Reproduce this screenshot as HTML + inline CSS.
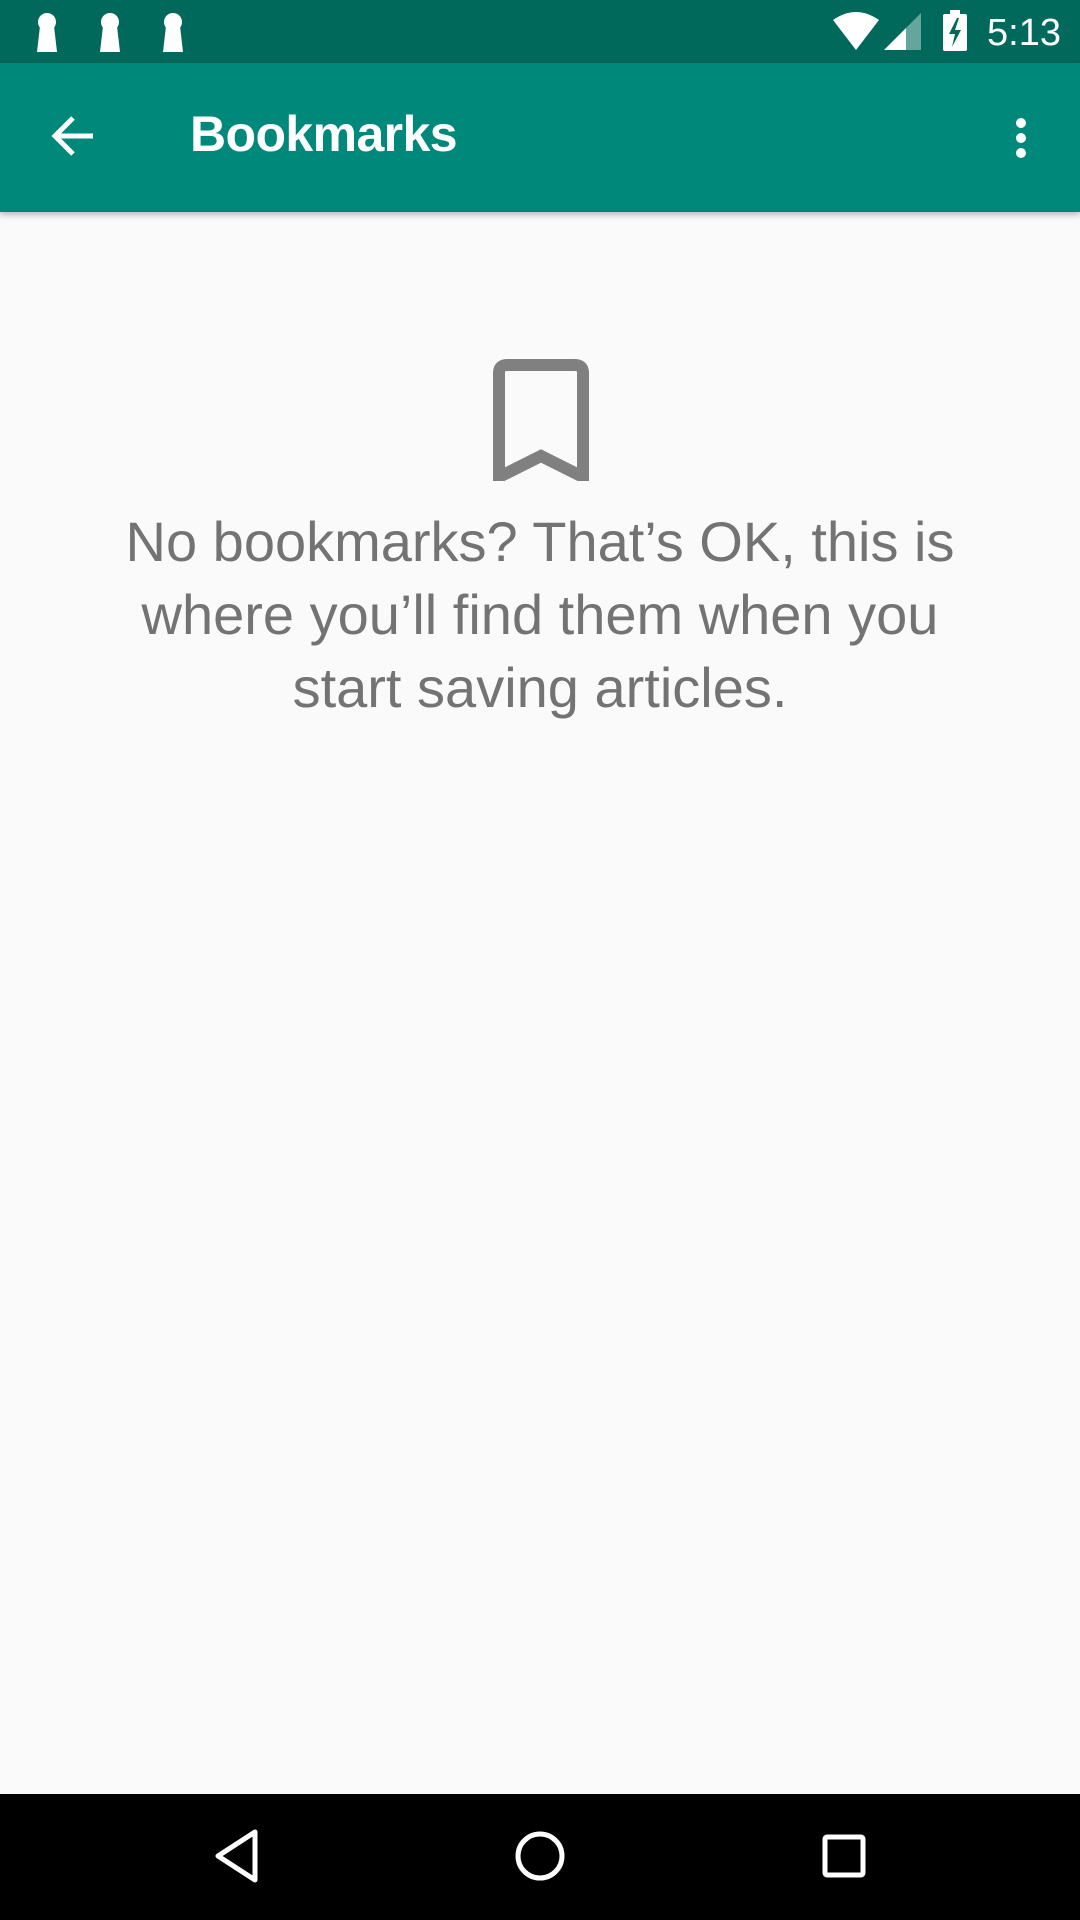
<!DOCTYPE html>
<html><head><meta charset="utf-8"><style>
html,body{margin:0;padding:0;}
body{width:1080px;height:1920px;background:#fafafa;position:relative;overflow:hidden;font-family:"Liberation Sans",sans-serif;}
.status{position:absolute;left:0;top:0;width:1080px;height:63px;background:#00695c;}
.bar{position:absolute;left:0;top:63px;width:1080px;height:149px;background:#00897b;box-shadow:0 3px 6px rgba(0,0,0,0.25);}
.title{position:absolute;left:190px;top:104px;font-size:50px;font-weight:bold;color:#fff;letter-spacing:-0.6px;}
.msg{position:absolute;left:0;width:1080px;text-align:center;font-size:56px;color:#737373;letter-spacing:0;font-weight:300;}
.nav{position:absolute;left:0;top:1794px;width:1080px;height:126px;background:#000;}
</style></head><body>
<div class="status">
<svg width="1080" height="63" style="position:absolute;left:0;top:0">
 <g fill="#fff">
  <g transform="translate(47,0)"><circle cx="0" cy="22" r="9"/><path d="M-7 26 L7 26 L10 52 L-10 52 Z"/></g>
  <g transform="translate(110,0)"><circle cx="0" cy="22" r="9"/><path d="M-7 26 L7 26 L10 52 L-10 52 Z"/></g>
  <g transform="translate(173,0)"><circle cx="0" cy="22" r="9"/><path d="M-7 26 L7 26 L10 52 L-10 52 Z"/></g>
  <path d="M833 20 Q856 4 879 20 L856 50 Z"/>
  <path d="M884 50 L906 28 L906 50 Z"/>
  <path d="M906 28 L921 13 L921 50 L906 50 Z" fill="#fff" fill-opacity="0.4"/>
  <rect x="943" y="14" width="24" height="37" rx="2"/>
  <rect x="950" y="10" width="10" height="5"/>
  <path d="M957 18 L949 34 L955 34 L952 47 L961 30 L955 30 L959 18 Z" fill="#00695c"/>
 </g>
 <text x="987" y="45" fill="#fff" font-size="38" font-family="Liberation Sans">5:13</text>
</svg>
</div>
<div class="bar">
<svg width="1080" height="149" style="position:absolute;left:0;top:0">
 <path d="M93 73 L56 73 M73 55 L55 73 L73 91" stroke="#fff" stroke-width="5" fill="none"/>
 <g fill="#fff"><circle cx="1021" cy="60" r="5"/><circle cx="1021" cy="75" r="5"/><circle cx="1021" cy="90" r="5"/></g>
</svg>
<div class="title" style="top:42px">Bookmarks</div>
</div>
<svg width="96" height="122" style="position:absolute;left:493px;top:359px">
 <path d="M6 118 L6 14 Q6 6 14 6 L82 6 Q90 6 90 14 L90 118 L48 97 Z" fill="none" stroke="#808080" stroke-width="12" stroke-linejoin="miter"/>
</svg>
<div class="msg" style="top:509px">No bookmarks? That’s OK, this is</div>
<div class="msg" style="top:582px">where you’ll find them when you</div>
<div class="msg" style="top:655px">start saving articles.</div>
<div class="nav">
<svg width="1080" height="126" style="position:absolute;left:0;top:0">
 <path d="M255 38 L255 86 L218 62 Z" fill="none" stroke="#fff" stroke-width="5" stroke-linejoin="round"/>
 <circle cx="540" cy="62" r="22" fill="none" stroke="#fff" stroke-width="5"/>
 <rect x="825" y="43" width="38" height="38" rx="2" fill="none" stroke="#fff" stroke-width="5"/>
</svg>
</div>
</body></html>
